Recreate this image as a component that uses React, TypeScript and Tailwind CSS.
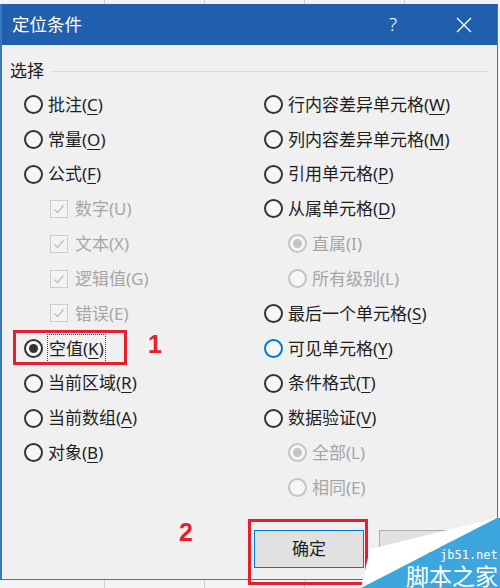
type Item = {
  label: string;
  keyChar: string;
  kind: 'radio' | 'check';
  checked?: boolean;
  disabled?: boolean;
  sub?: boolean;
  hover?: boolean;
  focus?: boolean;
};

const leftItems: Item[] = [
  { label: '批注', keyChar: 'C', kind: 'radio' },
  { label: '常量', keyChar: 'O', kind: 'radio' },
  { label: '公式', keyChar: 'F', kind: 'radio' },
  { label: '数字', keyChar: 'U', kind: 'check', checked: true, disabled: true, sub: true },
  { label: '文本', keyChar: 'X', kind: 'check', checked: true, disabled: true, sub: true },
  { label: '逻辑值', keyChar: 'G', kind: 'check', checked: true, disabled: true, sub: true },
  { label: '错误', keyChar: 'E', kind: 'check', checked: true, disabled: true, sub: true },
  { label: '空值', keyChar: 'K', kind: 'radio', checked: true, focus: true },
  { label: '当前区域', keyChar: 'R', kind: 'radio' },
  { label: '当前数组', keyChar: 'A', kind: 'radio' },
  { label: '对象', keyChar: 'B', kind: 'radio' },
];

const rightItems: Item[] = [
  { label: '行内容差异单元格', keyChar: 'W', kind: 'radio' },
  { label: '列内容差异单元格', keyChar: 'M', kind: 'radio' },
  { label: '引用单元格', keyChar: 'P', kind: 'radio' },
  { label: '从属单元格', keyChar: 'D', kind: 'radio' },
  { label: '直属', keyChar: 'I', kind: 'radio', checked: true, disabled: true, sub: true },
  { label: '所有级别', keyChar: 'L', kind: 'radio', disabled: true, sub: true },
  { label: '最后一个单元格', keyChar: 'S', kind: 'radio' },
  { label: '可见单元格', keyChar: 'Y', kind: 'radio', hover: true },
  { label: '条件格式', keyChar: 'T', kind: 'radio' },
  { label: '数据验证', keyChar: 'V', kind: 'radio' },
  { label: '全部', keyChar: 'L', kind: 'radio', checked: true, disabled: true, sub: true },
  { label: '相同', keyChar: 'E', kind: 'radio', disabled: true, sub: true },
];

function Radio({ checked, disabled, hover }: { checked?: boolean; disabled?: boolean; hover?: boolean }) {
  const border = disabled ? 'border-[#c4c4c4]' : hover ? 'border-[#0078d7]' : 'border-[#333333]';
  return (
    <span className={`flex h-[19px] w-[19px] shrink-0 items-center justify-center rounded-full border-2 bg-[#f6f6f6] ${border}`}>
      {checked && <span className={`h-[9px] w-[9px] rounded-full ${disabled ? 'bg-[#c4c4c4]' : 'bg-[#333333]'}`} />}
    </span>
  );
}

function Check() {
  return (
    <span className="flex h-[18px] w-[18px] shrink-0 items-center justify-center border border-[#cccccc] bg-[#f3f3f3]">
      <svg width="14" height="14" viewBox="0 0 14 14" fill="none">
        <polyline points="2.5,7.5 5.5,10.5 11.5,3.5" stroke="#bdbdbd" strokeWidth="1.3" />
      </svg>
    </span>
  );
}

function Label({ item }: { item: Item }) {
  const text = (
    <>
      {item.label}(
      {item.disabled ? item.keyChar : <span className="underline underline-offset-[3px]">{item.keyChar}</span>})
    </>
  );
  if (item.focus) {
    return <span className="border border-dotted border-[#444] px-[1px] leading-[27px]">{text}</span>;
  }
  return <span>{text}</span>;
}

function Row({ item, side }: { item: Item; side: 'left' | 'right' }) {
  let pad = '';
  if (side === 'left') pad = item.sub ? 'pl-[48px]' : 'pl-[22px]';
  else pad = item.sub ? 'pl-[24px]' : 'pl-0';
  const gap = item.kind === 'check' ? 'gap-[7px]' : item.focus ? 'gap-[4px]' : 'gap-[5px]';
  return (
    <div className={`flex h-[34.85px] items-center ${pad} ${gap} ${item.disabled ? 'text-[#a6a6a6]' : 'text-[#1e1e1e]'}`}>
      {item.kind === 'radio' ? <Radio checked={item.checked} disabled={item.disabled} hover={item.hover} /> : <Check />}
      <Label item={item} />
    </div>
  );
}

function GridStrip({ h }: { h: string }) {
  return (
    <div className={`flex ${h} w-full bg-[#f4f4f4]`}>
      <div className="w-[105px] border-r border-[#d0d0d0]" />
      <div className="w-[100px] border-r border-[#d0d0d0]" />
      <div className="w-[100px] border-r border-[#d0d0d0]" />
      <div className="w-[100px] border-r border-[#d0d0d0]" />
      <div className="flex-1" />
    </div>
  );
}

export default function App() {
  return (
    <div
      className="relative flex h-[588px] w-[500px] flex-col overflow-hidden bg-[#f4f4f4] text-[17px]"
      style={{ fontFamily: '"Noto Sans", "Noto Sans CJK SC", sans-serif' }}
    >
      <GridStrip h="h-[4px]" />

      {/* 对话框 */}
      <div className="flex h-[576px] w-[498px] flex-col border-b border-l-2 border-r border-[#3a78bd] bg-[#f0f0f0]">
        {/* 标题栏 */}
        <div className="flex h-[41px] shrink-0 items-center bg-[#1f5fae] pl-[10px] text-white">
          <span className="text-[17.5px]">定位条件</span>
          <span className="ml-auto mr-[59px] text-[19px] font-light">?</span>
          <svg width="16" height="16" viewBox="0 0 16 16" className="mr-[25px]">
            <path d="M1 1 L15 15 M15 1 L1 15" stroke="white" strokeWidth="1.4" />
          </svg>
        </div>

        <div className="flex flex-col pt-[13px]">
          {/* 分组标题 */}
          <div className="flex h-[26px] items-center pl-[8px] pr-[8px] text-[#1e1e1e]">
            <span>选择</span>
            <div className="ml-[6px] h-px flex-1 bg-[#dcdcdc]" />
          </div>

          <div className="mt-[3px] grid grid-cols-[262px_1fr]">
            <div className="flex flex-col">
              {leftItems.map((it) => (
                <Row key={it.label} item={it} side="left" />
              ))}
            </div>
            <div className="flex flex-col">
              {rightItems.map((it) => (
                <Row key={it.label} item={it} side="right" />
              ))}
            </div>
          </div>

          {/* 按钮 */}
          <div className="mt-[25px] flex justify-end gap-[15px] pr-[8px]">
            <button className="h-[38px] w-[110px] border border-[#0078d7] bg-[#e1e1e1] text-[17px] text-[#1e1e1e]">确定</button>
            <button className="h-[38px] w-[110px] border border-[#adadad] bg-[#e1e1e1] text-[17px] text-[#1e1e1e]">取消</button>
          </div>
        </div>
      </div>

      <GridStrip h="flex-1" />

      {/* 标注 */}
      <div className="absolute left-[13px] top-[330px] h-[35px] w-[114px] border-[3px] border-[#e3202b]" />
      <span
        className="absolute left-[148px] top-[330px] text-[25px] font-bold leading-[28px] text-[#e3202b]"
        style={{ fontFamily: '"Liberation Sans", sans-serif' }}
      >
        1
      </span>
      <div className="absolute left-[248px] top-[519px] h-[66px] w-[120px] border-[3px] border-[#e3202b]" />
      <span
        className="absolute left-[179px] top-[518px] text-[25px] font-bold leading-[28px] text-[#e3202b]"
        style={{ fontFamily: '"Liberation Sans", sans-serif' }}
      >
        2
      </span>

      {/* 水印 */}
      <svg className="absolute left-[361px] top-[517px]" width="139" height="71" viewBox="0 0 139 71">
        <polygon points="9,32 136,1 0,71" fill="#ffffff" />
        <polygon points="0,71 136,1 139,1 139,71" fill="#3ea6de" />
      </svg>
      <span
        className="absolute left-[440px] top-[548px] text-[12px] leading-[14px] text-white"
        style={{ fontFamily: '"DejaVu Sans Mono", monospace' }}
      >
        jb51.net
      </span>
      <span
        className="absolute left-[406px] top-[563px] text-[23px] leading-[25px] text-white"
        style={{ fontFamily: '"Noto Sans CJK SC", sans-serif' }}
      >
        脚本之家
      </span>
    </div>
  );
}
